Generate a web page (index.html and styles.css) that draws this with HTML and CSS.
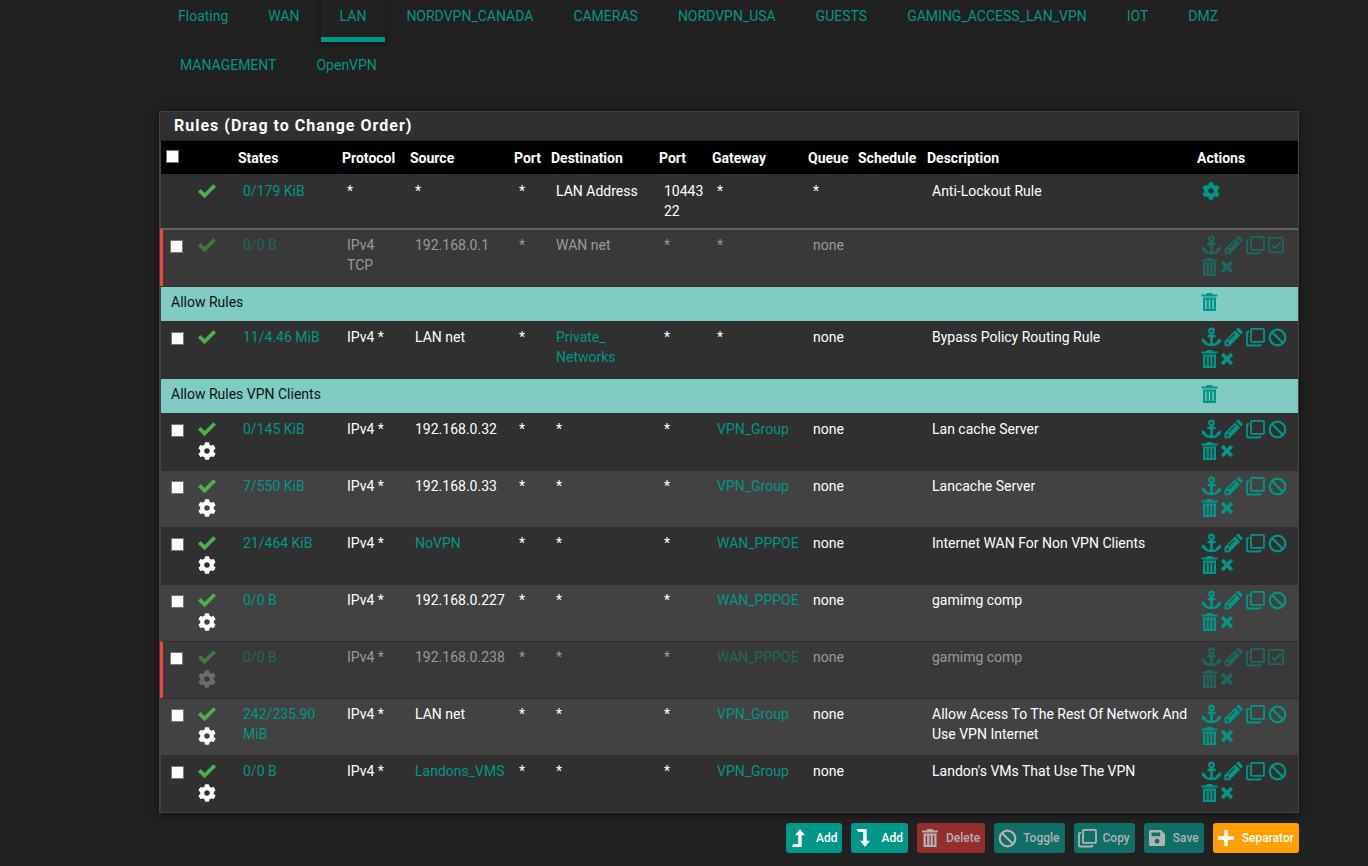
FILE: index.html
```html
<!DOCTYPE html>
<html lang="en">
<head>
<meta charset="utf-8">
<title>Firewall Rules: LAN</title>
<link rel="stylesheet" href="styles.css">
</head>
<body>
<svg class="sprite" aria-hidden="true">
  <symbol id="check" viewBox="0 0 20 20"><path d="M2.300 9.300 7.600 14.500 17.700 4.500" fill="none" stroke="currentColor" stroke-width="3.800"/></symbol>
  <symbol id="cog" viewBox="-25 -25 562 562"><path fill="currentColor" d="M487.4 315.7l-42.6-24.6c4.3-23.2 4.3-47 0-70.2l42.6-24.6c4.9-2.8 7.1-8.6 5.5-14-11.1-35.6-30-67.8-54.7-94.6-3.8-4.1-10-5.1-14.8-2.3L380.8 110c-17.9-15.4-38.5-27.3-60.8-35.1V25.8c0-5.6-3.9-10.5-9.4-11.7-36.7-8.2-74.3-7.8-109.2 0-5.5 1.2-9.4 6.1-9.4 11.7V75c-22.2 7.9-42.8 19.8-60.8 35.1L88.7 85.5c-4.9-2.8-11-1.9-14.8 2.3-24.7 26.7-43.6 58.9-54.7 94.6-1.7 5.4.6 11.2 5.5 14L67.3 221c-4.3 23.2-4.3 47 0 70.2l-42.6 24.6c-4.9 2.8-7.1 8.6-5.5 14 11.1 35.6 30 67.8 54.7 94.6 3.8 4.1 10 5.1 14.8 2.3l42.6-24.6c17.9 15.4 38.5 27.3 60.8 35.1v49.2c0 5.6 3.9 10.5 9.4 11.7 36.7 8.2 74.3 7.8 109.2 0 5.5-1.2 9.4-6.1 9.4-11.7v-49.2c22.2-7.9 42.8-19.8 60.8-35.1l42.6 24.6c4.9 2.8 11 1.9 14.8-2.3 24.7-26.7 43.6-58.9 54.7-94.6 1.500-5.500-.7-11.300-5.600-14.100zM256 336c-44.1 0-80-35.900-80-80s35.900-80 80-80 80 35.900 80 80-35.900 80-80 80z"/></symbol>
  <symbol id="anchor" viewBox="0 0 20 20"><g fill="none" stroke="currentColor"><circle cx="10.500" cy="4" r="2.300" stroke-width="2.200"/><path d="M10.500 6v12M6.500 9h8" stroke-width="2.600"/><path d="M2.700 13.500C3.500 16.300 7 17.900 10.500 17.900s7-1.600 7.800-4.400" stroke-width="2.600"/></g><path fill="currentColor" d="M.7 15.600 1.200 10.900 6 14.500zM20 15.600 19.600 10.900 15 14.500z"/></symbol>
  <symbol id="pencil" viewBox="0 0 20 20"><path fill="currentColor" fill-rule="evenodd" d="M1.500 19.200v-5L12.200 3.500l4.900 4.900L6.500 19.200zM13.200 2.500l1.400-1.400q.7-.7 1.500 0l3.300 3.300q.8.800 0 1.600L18 7.400zM3.500 17.400h1.900l.7-.8L4 14.500l-.7.800zM5.700 13.700l6.700-6.700-.7-.7L5 13z"/></symbol>
  <symbol id="copy" viewBox="0 0 20 20"><g fill="none" stroke="currentColor" stroke-width="1.800"><rect x="6" y="1.900" width="13" height="13" rx="1"/><path d="M4 5H3q-1 0-1 1v11.500q0 1 1 1h11.500q1 0 1-1V17"/></g></symbol>
  <symbol id="ban" viewBox="0 0 20 20"><g fill="none" stroke="currentColor" stroke-width="2.200"><circle cx="10.500" cy="10.500" r="7.800"/><path d="M5 5l11 11"/></g></symbol>
  <symbol id="checked" viewBox="0 0 20 20"><g fill="none" stroke="currentColor"><rect x="1.900" y="2.900" width="14.200" height="14.200" rx="1" stroke-width="1.800"/><path d="M5 10l3 3 6-6" stroke-width="2"/></g></symbol>
  <symbol id="trash" viewBox="0 0 17 20"><path fill="currentColor" fill-rule="evenodd" d="M.5 2.500H5L6 1h5l1 1.500h4.500v2H.5zM2 5.500h13V19H2zM4.300 7.500v9.500h1.300V7.500zM7.900 7.500v9.500h1.200V7.500zM11.400 7.500v9.500h1.300V7.500z"/></symbol>
  <symbol id="times" viewBox="0 0 14 20"><path d="M2.200 5l9.600 10M11.800 5 2.200 15" fill="none" stroke="currentColor" stroke-width="3.800"/></symbol>
  <symbol id="level-up" viewBox="0 0 14 20"><path fill="currentColor" d="M9 1l5 6.200h-3.300V19H.5L2.500 16h4.700V7.200H4z"/></symbol>
  <symbol id="level-down" viewBox="0 0 14 20"><path fill="currentColor" d="M9 19l5-6.200h-3.300V1H.5l2 3h4.700v8.800H4z"/></symbol>
  <symbol id="save" viewBox="0 0 20 20"><path fill="currentColor" fill-rule="evenodd" d="M3.500 2H14l4 4v10.500q0 1.500-1.500 1.500h-13Q2 18 2 16.500v-13Q2 2 3.500 2zM4.500 4.400v3.800h8.700V4.400zM10 10.800a2.400 2.400 0 1 0 .01 0z"/></symbol>
  <symbol id="plus" viewBox="0 0 20 20"><path d="M10 2v16M2 10h16" stroke="currentColor" stroke-width="3.600"/></symbol>
</svg>

<nav aria-label="Interfaces">
  <ul class="tabs">
    <li><a href="#floating">Floating</a></li>
    <li><a href="#wan">WAN</a></li>
    <li><a class="active" href="#lan" aria-current="page">LAN</a></li>
    <li><a href="#nordvpn-canada">NORDVPN_CANADA</a></li>
    <li><a href="#cameras">CAMERAS</a></li>
    <li><a href="#nordvpn-usa">NORDVPN_USA</a></li>
    <li><a href="#guests">GUESTS</a></li>
    <li><a href="#gaming">GAMING_ACCESS_LAN_VPN</a></li>
    <li><a href="#iot">IOT</a></li>
    <li><a href="#dmz">DMZ</a></li>
    <li><a href="#management">MANAGEMENT</a></li>
    <li><a href="#openvpn">OpenVPN</a></li>
  </ul>
</nav>

<main>
<section class="panel">
  <h2 class="panel-title">Rules (Drag to Change Order)</h2>
  <table class="rules">
    <colgroup>
      <col class="c-select"><col class="c-status"><col class="c-states"><col class="c-protocol"><col class="c-source"><col class="c-port"><col class="c-destination"><col class="c-dport"><col class="c-gateway"><col class="c-queue"><col class="c-schedule"><col><col class="c-actions">
    </colgroup>
    <thead>
      <tr>
        <th><input type="checkbox" aria-label="Select all rules"></th><th></th><th>States</th><th>Protocol</th><th>Source</th><th>Port</th><th>Destination</th><th>Port</th><th>Gateway</th><th>Queue</th><th>Schedule</th><th>Description</th><th>Actions</th>
      </tr>
    </thead>
    <tbody>
      <tr class="lockout">
        <td></td>
        <td><div class="status"><svg class="icon pass"><use href="#check"/></svg></div></td>
        <td><a href="#states">0/179 KiB</a></td><td>*</td><td>*</td><td>*</td><td>LAN Address</td><td>10443<br>22</td><td>*</td><td>*</td><td></td><td>Anti-Lockout Rule</td>
        <td><div class="actions"><a href="#settings" aria-label="Settings"><svg class="icon"><use href="#cog"/></svg></a></div></td>
      </tr>
    </tbody>
    <tbody class="user-rules">
      <tr class="disabled">
        <td><input type="checkbox" aria-label="Select rule"></td>
        <td><div class="status"><svg class="icon pass"><use href="#check"/></svg></div></td>
        <td><a href="#states">0/0 B</a></td><td>IPv4<br>TCP</td><td>192.168.0.1</td><td>*</td><td>WAN net</td><td>*</td><td>*</td><td>none</td><td></td><td></td>
        <td><div class="actions"><a href="#move" aria-label="Move"><svg class="icon"><use href="#anchor"/></svg></a><a href="#edit" aria-label="Edit"><svg class="icon"><use href="#pencil"/></svg></a><a href="#copy-rule" aria-label="Copy"><svg class="icon"><use href="#copy"/></svg></a><a href="#enable" aria-label="Enable"><svg class="icon"><use href="#checked"/></svg></a><a href="#delete" aria-label="Delete"><svg class="icon trash"><use href="#trash"/></svg></a><a href="#kill" aria-label="Kill states"><svg class="icon times"><use href="#times"/></svg></a></div></td>
      </tr>
      <tr class="separator">
        <td colspan="12">Allow Rules</td>
        <td><div class="actions"><a href="#delete" aria-label="Delete separator"><svg class="icon trash"><use href="#trash"/></svg></a></div></td>
      </tr>
      <tr>
        <td><input type="checkbox" aria-label="Select rule"></td>
        <td><div class="status"><svg class="icon pass"><use href="#check"/></svg></div></td>
        <td><a href="#states">11/4.46 MiB</a></td><td>IPv4 *</td><td>LAN net</td><td>*</td><td><a href="#alias">Private_<wbr>Networks</a></td><td>*</td><td>*</td><td>none</td><td></td><td>Bypass Policy Routing Rule</td>
        <td><div class="actions"><a href="#move" aria-label="Move"><svg class="icon"><use href="#anchor"/></svg></a><a href="#edit" aria-label="Edit"><svg class="icon"><use href="#pencil"/></svg></a><a href="#copy-rule" aria-label="Copy"><svg class="icon"><use href="#copy"/></svg></a><a href="#disable" aria-label="Disable"><svg class="icon"><use href="#ban"/></svg></a><a href="#delete" aria-label="Delete"><svg class="icon trash"><use href="#trash"/></svg></a><a href="#kill" aria-label="Kill states"><svg class="icon times"><use href="#times"/></svg></a></div></td>
      </tr>
      <tr class="separator">
        <td colspan="12">Allow Rules VPN Clients</td>
        <td><div class="actions"><a href="#delete" aria-label="Delete separator"><svg class="icon trash"><use href="#trash"/></svg></a></div></td>
      </tr>
      <tr>
        <td><input type="checkbox" aria-label="Select rule"></td>
        <td><div class="status"><svg class="icon pass"><use href="#check"/></svg><svg class="icon"><use href="#cog"/></svg></div></td>
        <td><a href="#states">0/145 KiB</a></td><td>IPv4 *</td><td>192.168.0.32</td><td>*</td><td>*</td><td>*</td><td><a href="#gateway">VPN_Group</a></td><td>none</td><td></td><td>Lan cache Server</td>
        <td><div class="actions"><a href="#move" aria-label="Move"><svg class="icon"><use href="#anchor"/></svg></a><a href="#edit" aria-label="Edit"><svg class="icon"><use href="#pencil"/></svg></a><a href="#copy-rule" aria-label="Copy"><svg class="icon"><use href="#copy"/></svg></a><a href="#disable" aria-label="Disable"><svg class="icon"><use href="#ban"/></svg></a><a href="#delete" aria-label="Delete"><svg class="icon trash"><use href="#trash"/></svg></a><a href="#kill" aria-label="Kill states"><svg class="icon times"><use href="#times"/></svg></a></div></td>
      </tr>
      <tr class="alt">
        <td><input type="checkbox" aria-label="Select rule"></td>
        <td><div class="status"><svg class="icon pass"><use href="#check"/></svg><svg class="icon"><use href="#cog"/></svg></div></td>
        <td><a href="#states">7/550 KiB</a></td><td>IPv4 *</td><td>192.168.0.33</td><td>*</td><td>*</td><td>*</td><td><a href="#gateway">VPN_Group</a></td><td>none</td><td></td><td>Lancache Server</td>
        <td><div class="actions"><a href="#move" aria-label="Move"><svg class="icon"><use href="#anchor"/></svg></a><a href="#edit" aria-label="Edit"><svg class="icon"><use href="#pencil"/></svg></a><a href="#copy-rule" aria-label="Copy"><svg class="icon"><use href="#copy"/></svg></a><a href="#disable" aria-label="Disable"><svg class="icon"><use href="#ban"/></svg></a><a href="#delete" aria-label="Delete"><svg class="icon trash"><use href="#trash"/></svg></a><a href="#kill" aria-label="Kill states"><svg class="icon times"><use href="#times"/></svg></a></div></td>
      </tr>
      <tr>
        <td><input type="checkbox" aria-label="Select rule"></td>
        <td><div class="status"><svg class="icon pass"><use href="#check"/></svg><svg class="icon"><use href="#cog"/></svg></div></td>
        <td><a href="#states">21/464 KiB</a></td><td>IPv4 *</td><td><a href="#alias">NoVPN</a></td><td>*</td><td>*</td><td>*</td><td><a href="#gateway">WAN_PPPOE</a></td><td>none</td><td></td><td>Internet WAN For Non VPN Clients</td>
        <td><div class="actions"><a href="#move" aria-label="Move"><svg class="icon"><use href="#anchor"/></svg></a><a href="#edit" aria-label="Edit"><svg class="icon"><use href="#pencil"/></svg></a><a href="#copy-rule" aria-label="Copy"><svg class="icon"><use href="#copy"/></svg></a><a href="#disable" aria-label="Disable"><svg class="icon"><use href="#ban"/></svg></a><a href="#delete" aria-label="Delete"><svg class="icon trash"><use href="#trash"/></svg></a><a href="#kill" aria-label="Kill states"><svg class="icon times"><use href="#times"/></svg></a></div></td>
      </tr>
      <tr class="alt">
        <td><input type="checkbox" aria-label="Select rule"></td>
        <td><div class="status"><svg class="icon pass"><use href="#check"/></svg><svg class="icon"><use href="#cog"/></svg></div></td>
        <td><a href="#states">0/0 B</a></td><td>IPv4 *</td><td>192.168.0.227</td><td>*</td><td>*</td><td>*</td><td><a href="#gateway">WAN_PPPOE</a></td><td>none</td><td></td><td>gamimg comp</td>
        <td><div class="actions"><a href="#move" aria-label="Move"><svg class="icon"><use href="#anchor"/></svg></a><a href="#edit" aria-label="Edit"><svg class="icon"><use href="#pencil"/></svg></a><a href="#copy-rule" aria-label="Copy"><svg class="icon"><use href="#copy"/></svg></a><a href="#disable" aria-label="Disable"><svg class="icon"><use href="#ban"/></svg></a><a href="#delete" aria-label="Delete"><svg class="icon trash"><use href="#trash"/></svg></a><a href="#kill" aria-label="Kill states"><svg class="icon times"><use href="#times"/></svg></a></div></td>
      </tr>
      <tr class="disabled">
        <td><input type="checkbox" aria-label="Select rule"></td>
        <td><div class="status"><svg class="icon pass"><use href="#check"/></svg><svg class="icon"><use href="#cog"/></svg></div></td>
        <td><a href="#states">0/0 B</a></td><td>IPv4 *</td><td>192.168.0.238</td><td>*</td><td>*</td><td>*</td><td><a href="#gateway">WAN_PPPOE</a></td><td>none</td><td></td><td>gamimg comp</td>
        <td><div class="actions"><a href="#move" aria-label="Move"><svg class="icon"><use href="#anchor"/></svg></a><a href="#edit" aria-label="Edit"><svg class="icon"><use href="#pencil"/></svg></a><a href="#copy-rule" aria-label="Copy"><svg class="icon"><use href="#copy"/></svg></a><a href="#enable" aria-label="Enable"><svg class="icon"><use href="#checked"/></svg></a><a href="#delete" aria-label="Delete"><svg class="icon trash"><use href="#trash"/></svg></a><a href="#kill" aria-label="Kill states"><svg class="icon times"><use href="#times"/></svg></a></div></td>
      </tr>
      <tr class="alt">
        <td><input type="checkbox" aria-label="Select rule"></td>
        <td><div class="status"><svg class="icon pass"><use href="#check"/></svg><svg class="icon"><use href="#cog"/></svg></div></td>
        <td><a href="#states">242/235.90 MiB</a></td><td>IPv4 *</td><td>LAN net</td><td>*</td><td>*</td><td>*</td><td><a href="#gateway">VPN_Group</a></td><td>none</td><td></td><td>Allow Acess To The Rest Of Network And Use VPN Internet</td>
        <td><div class="actions"><a href="#move" aria-label="Move"><svg class="icon"><use href="#anchor"/></svg></a><a href="#edit" aria-label="Edit"><svg class="icon"><use href="#pencil"/></svg></a><a href="#copy-rule" aria-label="Copy"><svg class="icon"><use href="#copy"/></svg></a><a href="#disable" aria-label="Disable"><svg class="icon"><use href="#ban"/></svg></a><a href="#delete" aria-label="Delete"><svg class="icon trash"><use href="#trash"/></svg></a><a href="#kill" aria-label="Kill states"><svg class="icon times"><use href="#times"/></svg></a></div></td>
      </tr>
      <tr>
        <td><input type="checkbox" aria-label="Select rule"></td>
        <td><div class="status"><svg class="icon pass"><use href="#check"/></svg><svg class="icon"><use href="#cog"/></svg></div></td>
        <td><a href="#states">0/0 B</a></td><td>IPv4 *</td><td><a href="#alias">Landons_VMS</a></td><td>*</td><td>*</td><td>*</td><td><a href="#gateway">VPN_Group</a></td><td>none</td><td></td><td>Landon's VMs That Use The VPN</td>
        <td><div class="actions"><a href="#move" aria-label="Move"><svg class="icon"><use href="#anchor"/></svg></a><a href="#edit" aria-label="Edit"><svg class="icon"><use href="#pencil"/></svg></a><a href="#copy-rule" aria-label="Copy"><svg class="icon"><use href="#copy"/></svg></a><a href="#disable" aria-label="Disable"><svg class="icon"><use href="#ban"/></svg></a><a href="#delete" aria-label="Delete"><svg class="icon trash"><use href="#trash"/></svg></a><a href="#kill" aria-label="Kill states"><svg class="icon times"><use href="#times"/></svg></a></div></td>
      </tr>
    </tbody>
  </table>
</section>

<div class="toolbar">
  <button type="button" class="btn"><svg class="icon level"><use href="#level-up"/></svg>Add</button>
  <button type="button" class="btn"><svg class="icon level"><use href="#level-down"/></svg>Add</button>
  <button type="button" class="btn danger" disabled><svg class="icon"><use href="#trash"/></svg>Delete</button>
  <button type="button" class="btn" disabled><svg class="icon"><use href="#ban"/></svg>Toggle</button>
  <button type="button" class="btn" disabled><svg class="icon"><use href="#copy"/></svg>Copy</button>
  <button type="button" class="btn" disabled><svg class="icon"><use href="#save"/></svg>Save</button>
  <button type="button" class="btn warning"><svg class="icon"><use href="#plus"/></svg>Separator</button>
</div>
</main>
</body>
</html>
```
FILE: styles.css
```css
* {
  box-sizing: border-box;
}

body {
  margin: 0;
  padding: 0 69px 0 159px;
  background: #212121;
  color: #fff;
  font: 14px/20px Roboto, "Liberation Sans", sans-serif;
}

a {
  color: #009688;
  text-decoration: none;
}

.sprite {
  display: none;
}

.icon {
  display: block;
  width: 20px;
  height: 20px;
}

.icon.trash {
  width: 17px;
}

.icon.times,
.icon.level {
  width: 14px;
}

/* Interface tabs */
.tabs {
  display: flex;
  flex-wrap: wrap;
  margin: -7px 0 20px;
  padding: 0;
  list-style: none;
}

.tabs li + li {
  margin-left: 2px;
}

.tabs a {
  display: block;
  padding: 13px 19px 11px;
  border-bottom: 5px solid transparent;
}

.tabs .active {
  border-color: #009688;
  background: #222;
  box-shadow: 0 2px 5px rgba(0, 0, 0, .4);
}

/* Rules panel */
.panel {
  border: 1px solid #424242;
  background: #303030;
  box-shadow: 0 1px 8px rgba(0, 0, 0, .5);
}

.panel-title {
  margin: 0;
  padding: 4px 14px;
  border-bottom: 1px solid #212121;
  font-size: 16px;
  font-weight: 700;
  letter-spacing: 1px;
  line-height: 20px;
}

.rules {
  width: 100%;
  border-spacing: 0;
  table-layout: fixed;
}

.c-select { width: 32px; }
.c-status { width: 41px; }
.c-states { width: 104px; }
.c-protocol { width: 68px; }
.c-source { width: 104px; }
.c-port { width: 37px; }
.c-destination { width: 108px; }
.c-dport { width: 53px; }
.c-gateway { width: 96px; }
.c-queue { width: 50px; }
.c-schedule { width: 69px; }
.c-actions { width: 106px; }

.rules th {
  height: 33px;
  padding: 0 0 0 5px;
  background: #000;
  font-weight: 700;
  text-align: left;
}

.rules td {
  height: 57px;
  padding: 5px 0 5px 10px;
  border-top: 1px solid #303030;
  vertical-align: top;
}

.rules tr > :first-child {
  border-left: 1px solid #424242;
}

.rules input {
  display: block;
  appearance: none;
  width: 13px;
  height: 13px;
  margin: 0;
  border: 1px solid #767676;
  background: #fff;
}

.rules th input {
  margin-bottom: 3px;
}

.rules td input {
  margin-top: 5px;
}

.rules input:checked {
  background: #009688;
}

.status,
.actions {
  display: flex;
  gap: 2px;
}

.status {
  flex-direction: column;
  margin-left: -5px;
}

.actions {
  flex-wrap: wrap;
  margin-left: -1px;
}

.pass {
  color: #4caf50;
}

.rules .lockout td {
  height: 54px;
  padding: 6px 0 6px 10px;
}

.rules .user-rules tr:first-child td {
  height: 58px;
  border-top: 2px solid #616161;
}

.rules .alt td {
  background: #424242;
}

.rules .disabled td {
  background: #393939;
  color: #999;
}

.rules .disabled > :first-child {
  border-left: 3px solid #f44336;
  padding-left: 7px;
}

.disabled a,
.disabled .icon {
  color: #1c6861;
}

.disabled .status .icon {
  color: #6c6c6c;
}

.disabled .status .pass {
  color: #427444;
}

.rules .separator td {
  height: 35px;
  background: #80cbc4;
  color: #111;
}

/* Bulk actions */
.toolbar {
  display: flex;
  flex-wrap: wrap;
  justify-content: flex-end;
  gap: 9px;
  margin: 10px 0 13px;
}

.btn {
  display: flex;
  align-items: center;
  gap: 6px;
  height: 30px;
  padding: 0 5px 0 3px;
  border: 0;
  border-radius: 3px;
  background: #009688;
  color: #fff;
  font: 500 12px/18px Roboto, "Liberation Sans", sans-serif;
}

.btn .level {
  margin: 0 5px 0 2px;
}

.btn.warning {
  background: #ffa000;
}

.btn:disabled {
  background: #0f6e65;
  color: #b2b2b2;
}

.btn.danger:disabled {
  background: #962d2d;
}
```
